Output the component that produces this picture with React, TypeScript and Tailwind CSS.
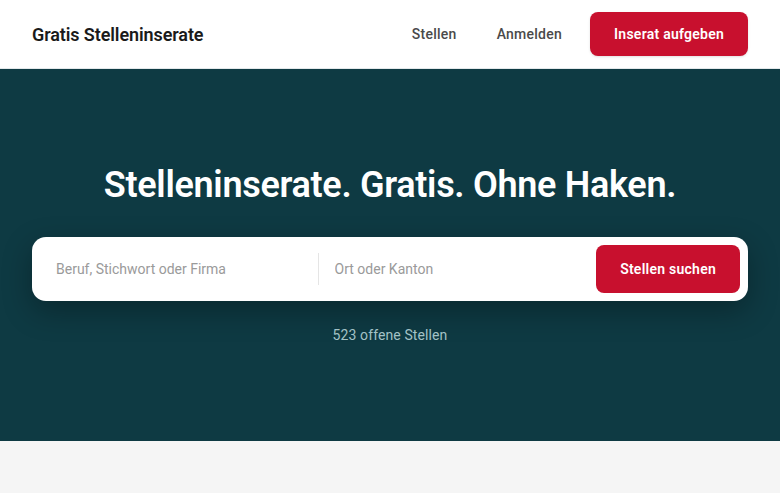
import React from "react";

export default function App() {
  return (
    <div className="min-h-screen bg-[#f5f5f5] font-[Roboto,'Liberation_Sans',sans-serif]">
      <header className="flex items-center justify-between border-b border-[#e3e8ea] bg-white px-8 py-3">
        <div className="text-[18px] font-semibold tracking-[-0.1px] text-[#1a1a1a]">Gratis Stelleninserate</div>
        <nav className="flex items-center gap-4">
          <a className="px-3 text-[14px] font-medium tracking-[0.25px] text-[#4a4a4a]">Stellen</a>
          <a className="px-3 text-[14px] font-medium tracking-[0.25px] text-[#4a4a4a]">Anmelden</a>
          <button className="rounded-lg bg-[#c8102e] px-6 py-3 text-[14px] leading-5 font-semibold tracking-[0.25px] text-white shadow-sm">
            Inserat aufgeben
          </button>
        </nav>
      </header>
      <section className="flex flex-col items-center bg-[#0e3a43] px-8 py-24">
        <h1 className="text-[36px] leading-10 font-semibold tracking-[-0.3px] text-white">
          Stelleninserate. Gratis. Ohne Haken.
        </h1>
        <div className="mt-8 flex w-full items-center rounded-[14px] bg-white p-2 shadow-[0_10px_30px_rgba(0,0,0,0.3)]">
          <input
            className="h-12 min-w-0 flex-1 bg-transparent px-4 text-[14px] text-[#333] outline-none placeholder:text-[#9a9a9a]"
            placeholder="Beruf, Stichwort oder Firma"
          />
          <div className="h-8 w-px bg-[#e5e5e5]" />
          <input
            className="h-12 min-w-0 flex-1 bg-transparent px-4 text-[14px] text-[#333] outline-none placeholder:text-[#9a9a9a]"
            placeholder="Ort oder Kanton"
          />
          <button className="h-12 rounded-lg bg-[#c8102e] px-6 text-[14px] font-semibold tracking-[0.25px] text-white">
            Stellen suchen
          </button>
        </div>
        <p className="mt-6 text-[14px] leading-5 tracking-[0.1px] text-[#a3c2c6]">523 offene Stellen</p>
      </section>
    </div>
  );
}
